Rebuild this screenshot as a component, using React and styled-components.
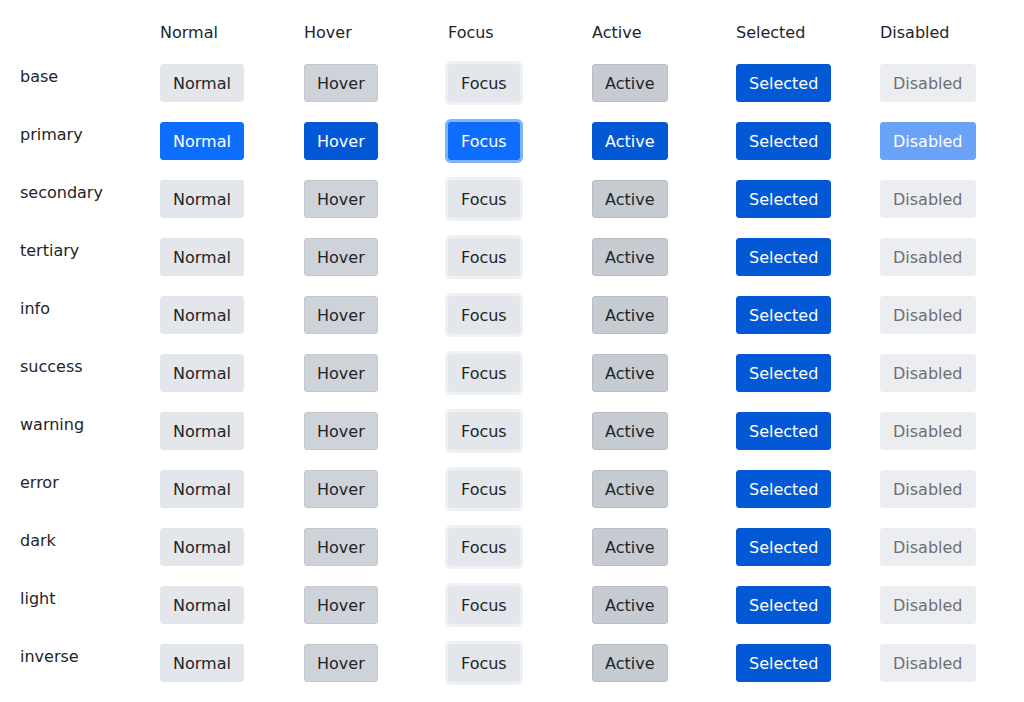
import styled, { createGlobalStyle, css } from "styled-components";

const GlobalStyle = createGlobalStyle`
  body {
    margin: 0;
    background: #ffffff;
    font-family: "DejaVu Sans", "Liberation Sans", sans-serif;
    color: #212529;
  }
`;

const states = ["Normal", "Hover", "Focus", "Active", "Selected", "Disabled"];
const variants = [
  "base",
  "primary",
  "secondary",
  "tertiary",
  "info",
  "success",
  "warning",
  "error",
  "dark",
  "light",
  "inverse",
];

// colours per state, the primary row gets its own blue set
const grey = {
  Normal: css`
    background: #e3e6ea;
    border-color: #e3e6ea;
    color: #212529;
  `,
  Hover: css`
    background: #ced2d9;
    border-color: #c3c7ce;
    color: #212529;
  `,
  Focus: css`
    background: #e3e6ea;
    border-color: #e3e6ea;
    color: #212529;
    box-shadow: 0 0 0 3px #eef0f2;
  `,
  Active: css`
    background: #c6cbd2;
    border-color: #b9bec6;
    color: #212529;
  `,
  Selected: css`
    background: #0358d6;
    border-color: #0358d6;
    color: #ffffff;
  `,
  Disabled: css`
    background: #ecedf0;
    border-color: #ecedf0;
    color: #6c6f75;
  `,
};

const blue = {
  Normal: css`
    background: #0d6efd;
    border-color: #0d6efd;
    color: #ffffff;
  `,
  Hover: css`
    background: #0358d6;
    border-color: #0358d6;
    color: #ffffff;
  `,
  Focus: css`
    background: #0d6efd;
    border-color: #0d6efd;
    color: #ffffff;
    box-shadow: 0 0 0 3px #80b1fd;
  `,
  Active: css`
    background: #0358d6;
    border-color: #0358d6;
    color: #ffffff;
  `,
  Selected: css`
    background: #0358d6;
    border-color: #0358d6;
    color: #ffffff;
  `,
  Disabled: css`
    background: #6aa2f7;
    border-color: #6aa2f7;
    color: #ffffff;
  `,
};

export default function App() {
  return (
    <>
      <GlobalStyle />
      <Table>
        <Corner />
        {states.map((s) => (
          <HeadCell key={s}>{s}</HeadCell>
        ))}
        {variants.map((v) => (
          <Row key={v}>
            <RowLabel>{v}</RowLabel>
            {states.map((s) => (
              <Cell key={s}>
                <Btn $state={s} $primary={v === "primary"}>
                  {s}
                </Btn>
              </Cell>
            ))}
          </Row>
        ))}
      </Table>
    </>
  );
}

const Table = styled.div`
  display: grid;
  grid-template-columns: 140px repeat(6, 144px);
  row-gap: 20px;
  padding: 20px;
`;

const Corner = styled.div``;

const HeadCell = styled.div`
  box-sizing: border-box;
  height: 24px;
  padding-top: 1px;
  font-size: 16px;
  line-height: 24px;
  color: #212529;
`;

const Row = styled.div`
  display: contents;
`;

const RowLabel = styled.div`
  padding-top: 1px;
  font-size: 16px;
  line-height: 24px;
  color: #212529;
`;

const Cell = styled.div`
  display: flex;
  align-items: flex-start;
`;

const Btn = styled.button`
  box-sizing: border-box;
  font-family: "DejaVu Sans", "Liberation Sans", sans-serif;
  font-size: 16px;
  line-height: 24px;
  height: 38px;
  padding: 2px 12px 0;
  border: 1px solid transparent;
  border-radius: 3px;
  cursor: pointer;
  ${(p) => (p.$primary ? blue : grey)[p.$state]}
`;
